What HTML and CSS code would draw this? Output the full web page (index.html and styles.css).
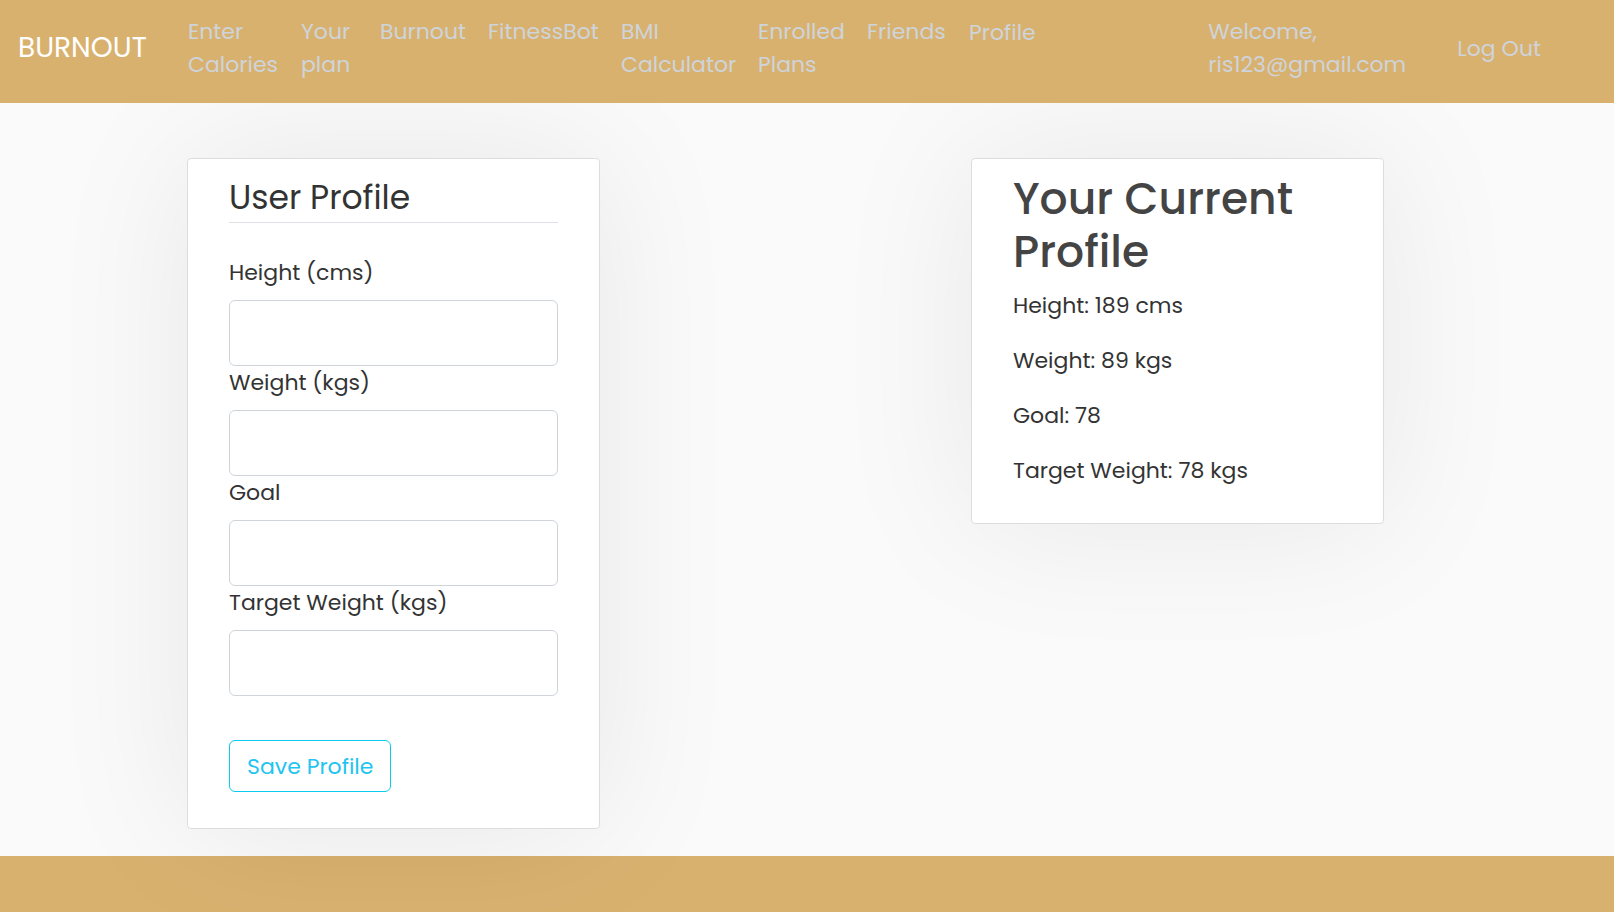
FILE: index.html
```html
<!DOCTYPE html>
<html lang="en">
<head>
<meta charset="utf-8">
<meta name="viewport" content="width=device-width, initial-scale=1">
<title>Burnout - Profile</title>
<link rel="stylesheet" href="styles.css">
</head>
<body>
<header class="navbar">
  <a class="brand" href="#">BURNOUT</a>
  <nav class="nav-list">
    <a class="nav-link" href="#">Enter Calories</a>
    <a class="nav-link" href="#">Your plan</a>
    <a class="nav-link" href="#">Burnout</a>
    <a class="nav-link" href="#">FitnessBot</a>
    <a class="nav-link" href="#">BMI Calculator</a>
    <a class="nav-link" href="#">Enrolled Plans</a>
    <a class="nav-link" href="#">Friends</a>
    <a class="nav-link nav-link-boxed" href="#">Profile</a>
  </nav>
  <div class="account">
    <span class="welcome">Welcome, ris123@gmail.com</span>
    <a class="logout" href="#">Log Out</a>
  </div>
</header>
<main class="page">
  <section class="card">
    <form class="profile-form">
      <fieldset class="fields">
        <legend class="form-title">User Profile</legend>
        <label class="label" for="height">Height (cms)</label>
        <input class="input" id="height" type="text">
        <label class="label" for="weight">Weight (kgs)</label>
        <input class="input" id="weight" type="text">
        <label class="label" for="goal">Goal</label>
        <input class="input" id="goal" type="text">
        <label class="label" for="target">Target Weight (kgs)</label>
        <input class="input" id="target" type="text">
      </fieldset>
      <button class="save" type="submit">Save Profile</button>
    </form>
  </section>
  <section class="card">
    <h1 class="summary-title">Your Current Profile</h1>
    <p class="stat">Height: 189 cms</p>
    <p class="stat">Weight: 89 kgs</p>
    <p class="stat">Goal: 78</p>
    <p class="stat">Target Weight: 78 kgs</p>
  </section>
</main>
<footer class="footer"></footer>
</body>
</html>
```
FILE: styles.css
```css
* {
  box-sizing: border-box;
}

body {
  margin: 0;
  min-height: 100vh;
  display: flex;
  flex-direction: column;
  background: #fafafa;
  color: #333;
  font-family: Poppins, Inter, sans-serif;
  font-size: 22px;
  line-height: 33px;
}

a {
  text-decoration: none;
}

.navbar {
  position: relative;
  z-index: 1;
  display: flex;
  align-items: center;
  padding: 6px 0 12px;
  background: #d9b16f;
}

.brand {
  width: 177px;
  padding: 0 0 3px 18px;
  color: #fff;
  font-size: 28px;
}

.nav-list {
  display: grid;
  grid-template-columns: 113px 79px 108px 133px 137px 109px 101px 92px;
  align-items: start;
}

.nav-link {
  padding: 9px 0 10px 11px;
  color: #ced4da;
}

.nav-link-boxed {
  border: 1px solid transparent;
}

.account {
  display: flex;
  align-items: center;
  margin-left: auto;
  padding-right: 73px;
  color: #ced4da;
}

.welcome {
  width: 249px;
  padding: 9px 40px 10px 0;
}

.logout {
  color: #ced4da;
}

.page {
  position: relative;
  display: grid;
  grid-template-columns: 413px 413px;
  justify-content: space-between;
  align-items: start;
  padding: 55px 230px 27px 187px;
}

.card {
  padding: 13px 41px 36px;
  background: #fff;
  border: 1px solid #dcdddf;
  border-radius: 4px;
  box-shadow: 0 0 144px rgba(0, 0, 0, 0.08);
}

.profile-form {
  padding-top: 2px;
}

.fields {
  display: block;
  margin: 0;
  padding: 0;
  border: 0;
  min-width: 0;
}

.form-title {
  width: 100%;
  margin-bottom: 33px;
  padding: 0;
  border-bottom: 1px solid #dee2e6;
  font-size: 33px;
  line-height: 48px;
}

.label {
  display: block;
  margin-bottom: 11px;
}

.input {
  display: block;
  width: 100%;
  height: 66px;
  padding: 8px 16px;
  background: #fff;
  border: 1px solid #ced4da;
  border-radius: 6px;
  font: inherit;
}

.save {
  margin-top: 44px;
  padding: 9px 17px 8px;
  display: block;
  background: transparent;
  border: 1px solid #0dcaf0;
  border-radius: 6px;
  color: #1fc4f0;
  font: inherit;
}

.summary-title {
  margin: 0 0 11px;
  color: #444;
  font-size: 44px;
  font-weight: 500;
  line-height: 53px;
}

.stat {
  margin: 0 0 22px;
}

.stat:last-child {
  margin-bottom: 0;
}

.footer {
  flex: 1;
  min-height: 56px;
  background: #d9b16f;
}
```
